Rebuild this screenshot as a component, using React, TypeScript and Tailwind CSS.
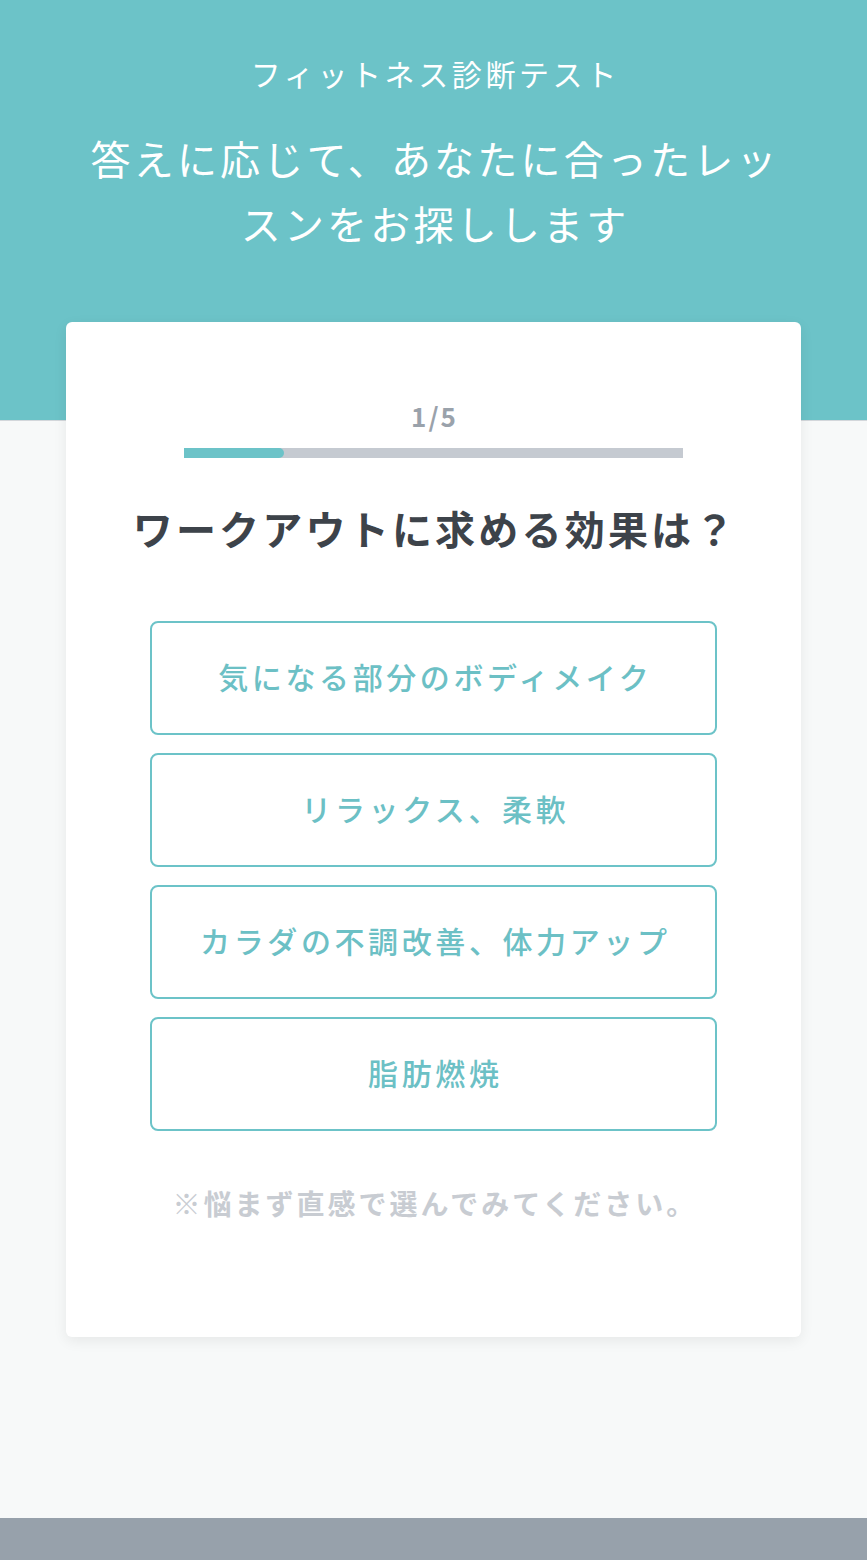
import React from "react";

const options = [
  "気になる部分のボディメイク",
  "リラックス、柔軟",
  "カラダの不調改善、体力アップ",
  "脂肪燃焼",
];

export default function App() {
  return (
    <div
      className="min-h-[1560px] bg-[#f7f9f9] flex flex-col"
      style={{ fontFamily: '"Noto Sans CJK JP", "Noto Sans", sans-serif' }}
    >
      <header className="h-[421px] bg-[#6cc3c8] border-b border-[#d3d7db] flex flex-col items-center text-white shrink-0">
        <h1 className="mt-[53px] text-[30px] leading-[40px] tracking-[3.6px] font-normal pl-[3.6px]">
          フィットネス診断テスト
        </h1>
        <p className="mt-[33px] w-[700px] text-center text-[40px] leading-[65px] tracking-[3.2px] pl-[3.2px]">
          答えに応じて、あなたに合ったレッスンをお探しします
        </p>
      </header>

      <main className="flex-1 flex flex-col items-center">
        <section className="-mt-[99px] w-[735px] bg-white rounded-md shadow-[0_4px_14px_rgba(0,0,0,0.07)] flex flex-col items-center pt-[78px] pb-[114px]">
          <div className="text-[26px] leading-[32px] font-bold text-[#9aa2ab] tracking-[0.08em] pl-[0.08em]">
            1/5
          </div>
          <div className="mt-[16px] w-[499px] h-[10px] bg-[#c5cad1]">
            <div className="h-full w-[20%] bg-[#6cc3c8] rounded-r-full" />
          </div>
          <h2 className="mt-[45px] text-[40px] leading-[50px] font-bold text-[#3d434a] tracking-[3.2px] pl-[3.2px]">
            ワークアウトに求める効果は？
          </h2>
          <div className="mt-[68px] w-[567px] flex flex-col gap-[18px]">
            {options.map((o) => (
              <button
                key={o}
                className="h-[114px] w-full border-2 border-[#6cc3c8] rounded-lg bg-white flex items-center justify-center pb-[4px] text-[30px] font-medium text-[#6cc0c5] tracking-[3.6px] pl-[3.6px]"
              >
                {o}
              </button>
            ))}
          </div>
          <p className="mt-[52px] text-[28px] leading-[40px] font-bold text-[#c8ccd2] tracking-[3px] pl-[3px]">
            ※悩まず直感で選んでみてください。
          </p>
        </section>
      </main>

      <footer className="h-[42px] bg-[#97a1ab] shrink-0" />
    </div>
  );
}
